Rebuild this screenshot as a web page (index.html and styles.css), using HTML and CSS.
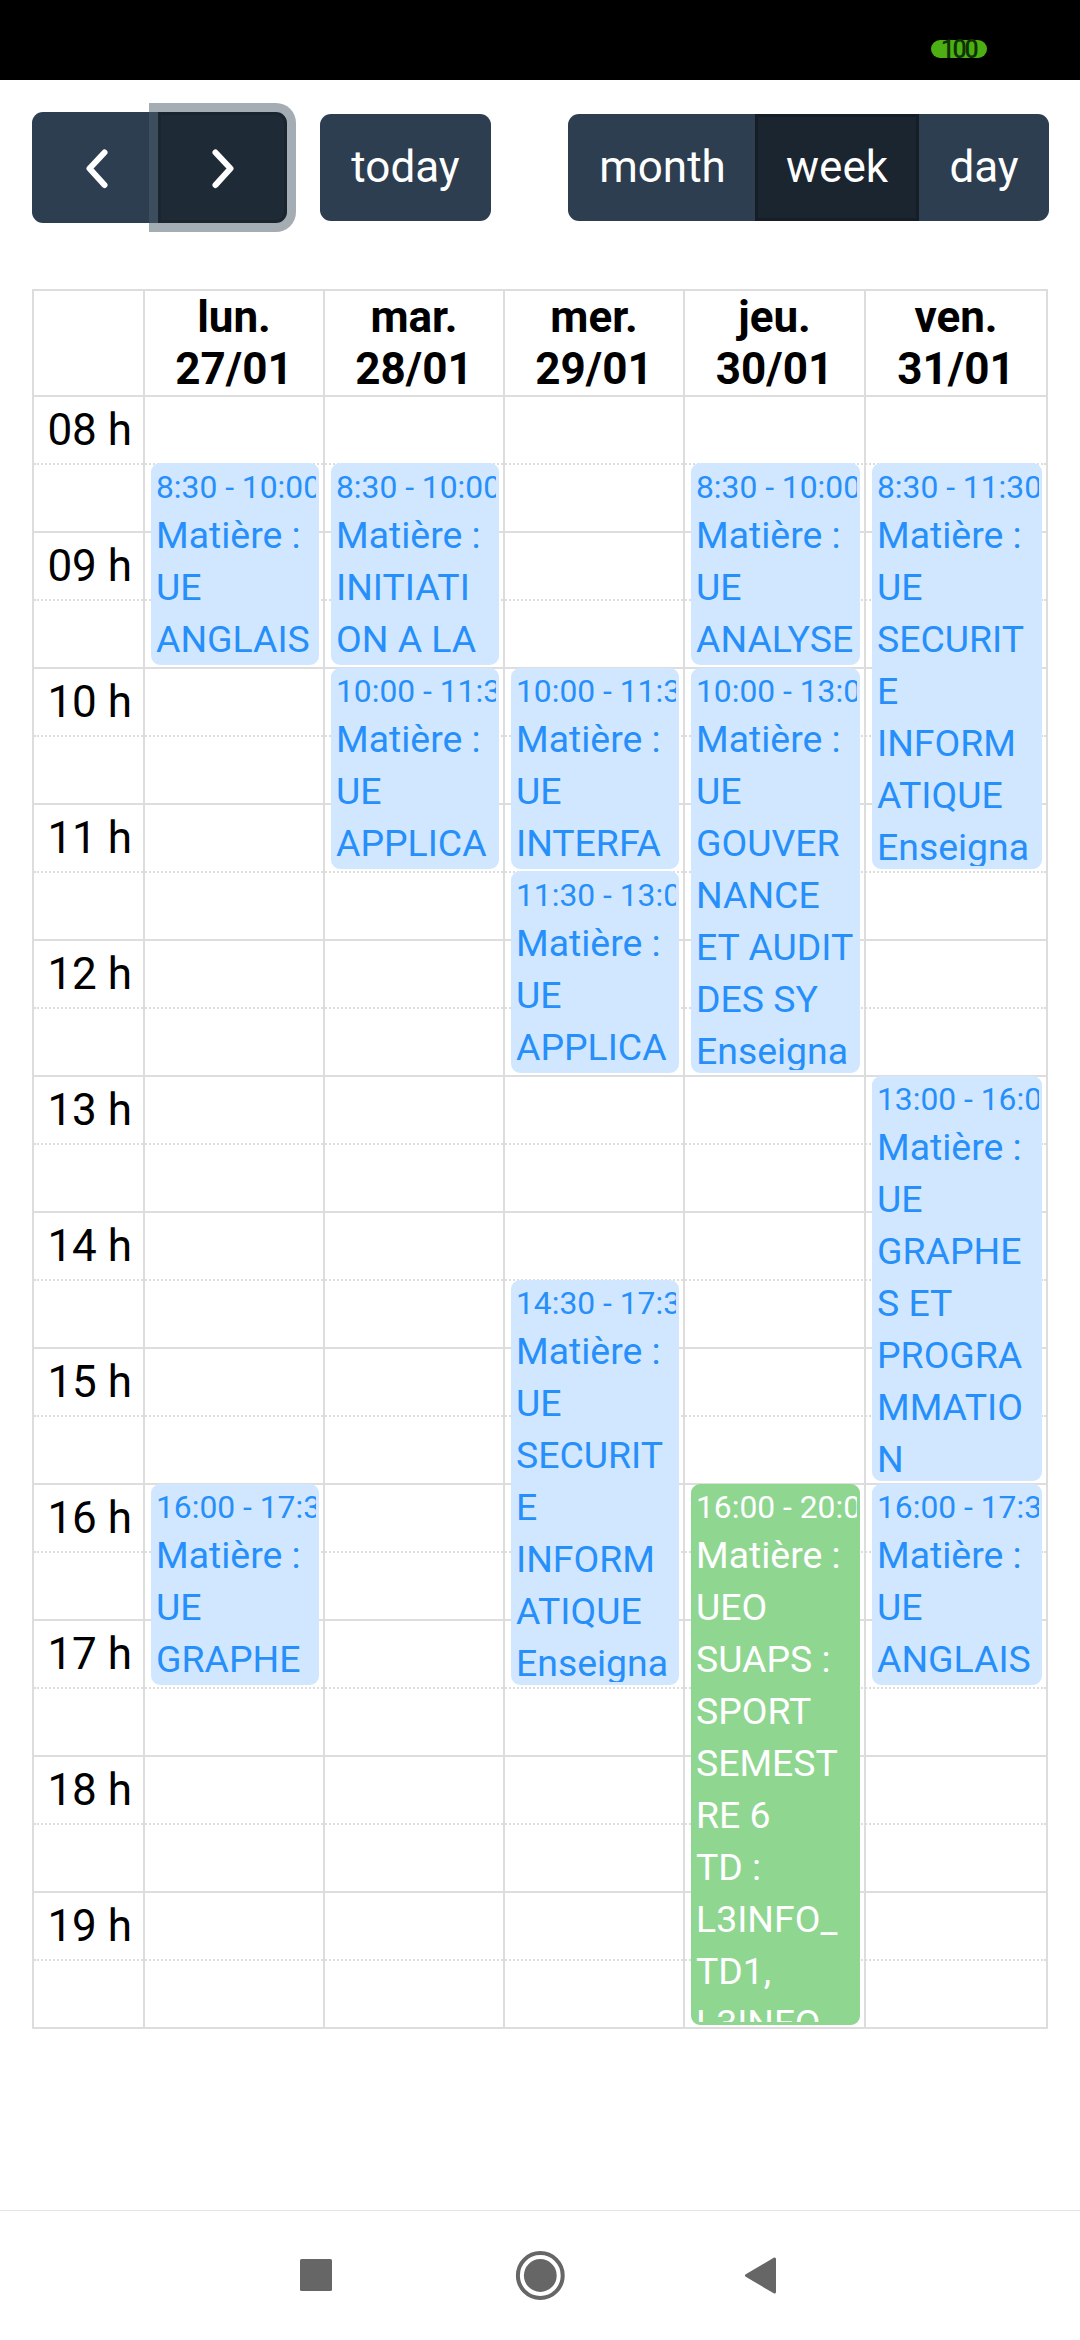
FILE: index.html
```html
<!DOCTYPE html>
<html lang="fr">
<head>
<meta charset="utf-8">
<title>Emploi du temps</title>
<link rel="stylesheet" href="styles.css">
</head>
<body>
<div class="screen">
  <div class="statusbar"><div class="battery">100</div></div>

  <main class="page">
    <header class="toolbar">
      <div class="toolbar-left">
        <div class="group nav-group">
          <button class="btn prev" aria-label="prev"><svg width="24" height="42" viewBox="0 0 24 42"><path d="M19.5 4.5 4.5 20.5 19.5 37"/></svg></button>
          <button class="btn next" aria-label="next"><svg width="24" height="42" viewBox="0 0 24 42"><path d="M4.5 4.5 19.5 20.5 4.5 37"/></svg></button>
        </div>
        <button class="btn today">today</button>
      </div>
      <div class="group">
        <button class="btn month">month</button>
        <button class="btn week active">week</button>
        <button class="btn day">day</button>
      </div>
    </header>

    <section class="calendar">
      <div class="column" style="grid-column:1"></div>
      <div class="column" style="grid-column:2"></div>
      <div class="column" style="grid-column:3"></div>
      <div class="column" style="grid-column:4"></div>
      <div class="column" style="grid-column:5"></div>
      <div class="column" style="grid-column:6"></div>

      <div class="line header-line"></div>
      <div class="line" style="grid-row:2"></div><div class="line minor" style="grid-row:3"></div>
      <div class="line" style="grid-row:4"></div><div class="line minor" style="grid-row:5"></div>
      <div class="line" style="grid-row:6"></div><div class="line minor" style="grid-row:7"></div>
      <div class="line" style="grid-row:8"></div><div class="line minor" style="grid-row:9"></div>
      <div class="line" style="grid-row:10"></div><div class="line minor" style="grid-row:11"></div>
      <div class="line" style="grid-row:12"></div><div class="line minor" style="grid-row:13"></div>
      <div class="line" style="grid-row:14"></div><div class="line minor" style="grid-row:15"></div>
      <div class="line" style="grid-row:16"></div><div class="line minor" style="grid-row:17"></div>
      <div class="line" style="grid-row:18"></div><div class="line minor" style="grid-row:19"></div>
      <div class="line" style="grid-row:20"></div><div class="line minor" style="grid-row:21"></div>
      <div class="line" style="grid-row:22"></div><div class="line minor" style="grid-row:23"></div>
      <div class="line" style="grid-row:24"></div><div class="line minor" style="grid-row:25"></div>

      <div class="day-name" style="grid-column:2">lun.<br>27/01</div>
      <div class="day-name" style="grid-column:3">mar.<br>28/01</div>
      <div class="day-name" style="grid-column:4">mer.<br>29/01</div>
      <div class="day-name" style="grid-column:5">jeu.<br>30/01</div>
      <div class="day-name" style="grid-column:6">ven.<br>31/01</div>

      <div class="hour" style="grid-row:2">08 h</div>
      <div class="hour" style="grid-row:4">09 h</div>
      <div class="hour" style="grid-row:6">10 h</div>
      <div class="hour" style="grid-row:8">11 h</div>
      <div class="hour" style="grid-row:10">12 h</div>
      <div class="hour" style="grid-row:12">13 h</div>
      <div class="hour" style="grid-row:14">14 h</div>
      <div class="hour" style="grid-row:16">15 h</div>
      <div class="hour" style="grid-row:18">16 h</div>
      <div class="hour" style="grid-row:20">17 h</div>
      <div class="hour" style="grid-row:22">18 h</div>
      <div class="hour" style="grid-row:24">19 h</div>

      <article class="event flush" style="grid-column:2;grid-row:3/6"><div class="time">8:30 - 10:00</div><div class="title">Matière :<br>UE<br>ANGLAIS</div></article>
      <article class="event" style="grid-column:2;grid-row:18/21"><div class="time">16:00 - 17:30</div><div class="title">Matière :<br>UE<br>GRAPHE</div></article>

      <article class="event flush" style="grid-column:3;grid-row:3/6"><div class="time">8:30 - 10:00</div><div class="title">Matière :<br>INITIATI<br>ON A LA</div></article>
      <article class="event" style="grid-column:3;grid-row:6/9"><div class="time">10:00 - 11:30</div><div class="title">Matière :<br>UE<br>APPLICA</div></article>

      <article class="event" style="grid-column:4;grid-row:6/9"><div class="time">10:00 - 11:30</div><div class="title">Matière :<br>UE<br>INTERFA</div></article>
      <article class="event flush" style="grid-column:4;grid-row:9/12"><div class="time">11:30 - 13:00</div><div class="title">Matière :<br>UE<br>APPLICA</div></article>
      <article class="event" style="grid-column:4;grid-row:15/21"><div class="time">14:30 - 17:30</div><div class="title">Matière :<br>UE<br>SECURIT<br>E<br>INFORM<br>ATIQUE<br>Enseigna</div></article>

      <article class="event flush" style="grid-column:5;grid-row:3/6"><div class="time">8:30 - 10:00</div><div class="title">Matière :<br>UE<br>ANALYSE</div></article>
      <article class="event" style="grid-column:5;grid-row:6/12"><div class="time">10:00 - 13:00</div><div class="title">Matière :<br>UE<br>GOUVER<br>NANCE<br>ET AUDIT<br>DES SY<br>Enseigna</div></article>
      <article class="event sport" style="grid-column:5;grid-row:18/26"><div class="time">16:00 - 20:00</div><div class="title">Matière :<br>UEO<br>SUAPS :<br>SPORT<br>SEMEST<br>RE 6<br>TD :<br>L3INFO_<br>TD1,<br>L3INFO_</div></article>

      <article class="event flush" style="grid-column:6;grid-row:3/9"><div class="time">8:30 - 11:30</div><div class="title">Matière :<br>UE<br>SECURIT<br>E<br>INFORM<br>ATIQUE<br>Enseigna</div></article>
      <article class="event" style="grid-column:6;grid-row:12/18"><div class="time">13:00 - 16:00</div><div class="title">Matière :<br>UE<br>GRAPHE<br>S ET<br>PROGRA<br>MMATIO<br>N</div></article>
      <article class="event" style="grid-column:6;grid-row:18/21"><div class="time">16:00 - 17:30</div><div class="title">Matière :<br>UE<br>ANGLAIS</div></article>
    </section>
  </main>

  <nav class="system-nav">
    <svg width="50" height="50" viewBox="0 0 50 50"><rect x="6" y="8" width="32" height="32" rx="1.5"/></svg>
    <svg width="50" height="50" viewBox="0 0 50 50"><circle class="ring" cx="25.3" cy="24.5" r="22.4"/><circle cx="25.3" cy="24.5" r="16.4"/></svg>
    <svg width="50" height="50" viewBox="0 0 50 50"><path class="back" d="M10.5 24.5 38.5 8V41Z"/></svg>
  </nav>
</div>
</body>
</html>
```
FILE: styles.css
```css
* { box-sizing: border-box; }

body {
  margin: 0;
  background: #fff;
  color: #000;
  font-family: Roboto, "Liberation Sans", sans-serif;
  font-size: 44px;
}

.screen {
  display: flex;
  flex-direction: column;
  width: 1080px;
  height: 2340px;
  overflow: hidden;
}

.statusbar {
  flex: none;
  display: flex;
  justify-content: flex-end;
  height: 80px;
  padding: 40px 93px 0 0;
  background: #000;
}

.battery {
  width: 56px;
  height: 18px;
  padding-right: 1px;
  border-radius: 9px;
  background: #4caf14;
  color: #0f3000;
  font-size: 25px;
  font-weight: 500;
  line-height: 19px;
  letter-spacing: -2.4px;
  text-align: center;
}

.page {
  flex: 1;
  padding: 32px 32px 0;
}

.toolbar {
  display: flex;
  justify-content: space-between;
  align-items: center;
  width: 1017px;
  height: 111px;
}

.toolbar-left {
  display: flex;
  align-items: center;
  gap: 33px;
}

.group { display: flex; }

.btn {
  height: 107px;
  padding: 0 0 1px;
  border: 0;
  background: #2c3e50;
  color: #fff;
  font: inherit;
  text-align: center;
}

.btn svg {
  display: block;
  margin: 3px auto 0;
  fill: none;
  stroke: #fff;
  stroke-width: 6;
  stroke-linecap: round;
  stroke-linejoin: round;
}

.nav-group .btn { height: 111px; }
.prev { width: 126px; padding-left: 4px; border-radius: 11px 0 0 11px; }
.next {
  width: 129px;
  border: 3px solid #1a252f;
  border-radius: 0 11px 11px 0;
  background: #1e2b37;
  box-shadow: 0 0 0 9px rgba(76, 91, 106, .5);
}
.today { width: 171px; border-radius: 11px; }
.month { width: 187px; padding-left: 2px; border-radius: 11px 0 0 11px; }
.week { width: 164px; }
.day { width: 130px; border-radius: 0 11px 11px 0; }
.active { border: 3px solid #151e27; background: #1a252f; }

.calendar {
  display: grid;
  grid-template-columns: 111px 180px 180px 180px 181px 182px;
  grid-template-rows: 106px repeat(24, 68px);
  width: 1016px;
  margin-top: 66px;
  border: solid #ddd;
  border-width: 0 2px 2px 0;
}

.column {
  grid-row: 1 / -1;
  border-left: 2px solid #ddd;
}

.line {
  grid-column: 1 / -1;
  border-top: 2px solid #ddd;
}

.header-line { grid-row: 1; }
.minor { border-top-style: dotted; margin-left: 2px; }

.day-name {
  grid-row: 1;
  padding: 2px 0 0 2px;
  font-weight: 700;
  line-height: 52px;
  text-align: center;
}

.hour {
  grid-column: 1;
  padding: 9px 11px 0 0;
  line-height: 52px;
  text-align: right;
  white-space: nowrap;
}

.event {
  min-width: 0;
  min-height: 0;
  margin: 1px 4px 2px 8px;
  padding-left: 2px;
  border: 3px solid #d1e7ff;
  border-radius: 9px;
  background: #d1e7ff;
  color: #268ffa;
  overflow: hidden;
  white-space: nowrap;
}

.flush { margin-top: 0; padding-top: 1px; }

.time {
  padding: 1px 0 3px;
  font-size: 31.8px;
  line-height: 38px;
}

.title {
  font-size: 37.4px;
  line-height: 52px;
}

.sport {
  border-color: #8fd691;
  background: #8fd691;
  color: #fff;
}

.system-nav {
  flex: none;
  display: flex;
  justify-content: center;
  gap: 171px;
  height: 130px;
  padding: 40px 0 0;
  border-top: 1px solid #e4e4e4;
  fill: #666;
}

.ring { fill: none; stroke: #666; stroke-width: 4; }
.back { stroke: #666; stroke-width: 3; stroke-linejoin: round; }
```
